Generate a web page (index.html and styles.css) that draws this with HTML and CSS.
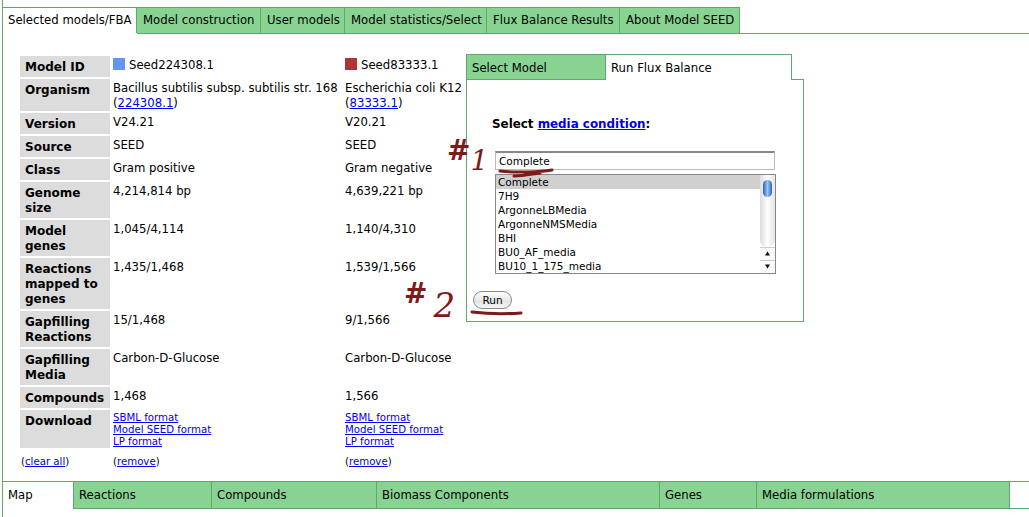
FILE: index.html
```html
<!DOCTYPE html>
<html lang="en">
<head>
    <meta charset="UTF-8">
    <title>Model SEED - Selected models</title>
    <link rel="stylesheet" href="styles.css">
</head>
<body>
    <div class="page">
        <div class="tabs top-tabs">
            <div class="tab active first">Selected models/FBA</div>
            <div class="tab">Model construction</div>
            <div class="tab">User models</div>
            <div class="tab">Model statistics/Select</div>
            <div class="tab">Flux Balance Results</div>
            <div class="tab">About Model SEED</div>
        </div>
        <div class="main">
            <table class="models">
                <tr>
                    <th>Model ID</th>
                    <td><span class="swatch blue"></span>Seed224308.1</td>
                    <td><span class="swatch red"></span>Seed83333.1</td>
                </tr>
                <tr>
                    <th>Organism</th>
                    <td>Bacillus subtilis subsp. subtilis str. 168<br>(<a href="#">224308.1</a>)</td>
                    <td>Escherichia coli K12<br>(<a href="#">83333.1</a>)</td>
                </tr>
                <tr><th>Version</th><td>V24.21</td><td>V20.21</td></tr>
                <tr><th>Source</th><td>SEED</td><td>SEED</td></tr>
                <tr><th>Class</th><td>Gram positive</td><td>Gram negative</td></tr>
                <tr><th>Genome size</th><td>4,214,814 bp</td><td>4,639,221 bp</td></tr>
                <tr><th>Model genes</th><td>1,045/4,114</td><td>1,140/4,310</td></tr>
                <tr><th>Reactions mapped to genes</th><td>1,435/1,468</td><td>1,539/1,566</td></tr>
                <tr><th>Gapfilling Reactions</th><td>15/1,468</td><td>9/1,566</td></tr>
                <tr><th>Gapfilling Media</th><td>Carbon-D-Glucose</td><td>Carbon-D-Glucose</td></tr>
                <tr><th>Compounds</th><td>1,468</td><td>1,566</td></tr>
                <tr>
                    <th>Download</th>
                    <td class="small"><a href="#">SBML format</a><br><a href="#">Model SEED format</a><br><a href="#">LP format</a></td>
                    <td class="small"><a href="#">SBML format</a><br><a href="#">Model SEED format</a><br><a href="#">LP format</a></td>
                </tr>
                <tr class="foot">
                    <td>(<a href="#">clear all</a>)</td>
                    <td>(<a href="#">remove</a>)</td>
                    <td>(<a href="#">remove</a>)</td>
                </tr>
            </table>
            <div class="fba">
                <div class="tabs sub-tabs">
                    <div class="tab select-tab">Select Model</div>
                    <div class="tab active run-tab">Run Flux Balance</div>
                </div>
                <div class="fba-body">
                    <p class="media-title">Select <a href="#">media condition</a>:</p>
                    <input class="media-input" type="text" value="Complete">
                    <div class="listbox">
                        <ul>
                            <li class="selected">Complete</li>
                            <li>7H9</li>
                            <li>ArgonneLBMedia</li>
                            <li>ArgonneNMSMedia</li>
                            <li>BHI</li>
                            <li>BU0_AF_media</li>
                            <li>BU10_1_175_media</li>
                        </ul>
                        <div class="scroll">
                            <div class="track"><div class="thumb"></div></div>
                            <div class="arrow"><svg width="15" height="13" viewBox="0 0 15 13"><path d="M7.5 4.5 L10 8.5 H5 Z" fill="#111"/></svg></div>
                            <div class="arrow"><svg width="15" height="13" viewBox="0 0 15 13"><path d="M7.5 8.5 L10 4.5 H5 Z" fill="#111"/></svg></div>
                        </div>
                    </div>
                    <button class="run" type="button">Run</button>
                </div>
                <span class="note note-one">#<span class="digit">1</span></span>
                <span class="note note-two">#<span class="digit digit-two">2</span></span>
                <svg class="scribble scribble-one" width="70" height="14" viewBox="0 0 70 14"><path d="M4 4 C20 6 45 5 56 3 M18 9 C28 9 36 7 44 6" fill="none" stroke="#7d1a1a" stroke-width="3" stroke-linecap="round"/></svg>
                <svg class="scribble scribble-two" width="60" height="10" viewBox="0 0 60 10"><path d="M3 4 C20 6 38 6 52 5" fill="none" stroke="#7d1a1a" stroke-width="3" stroke-linecap="round"/></svg>
            </div>
        </div>
        <div class="tabs bottom-tabs">
            <div class="tab active map-tab">Map</div>
            <div class="tab w-reactions">Reactions</div>
            <div class="tab w-compounds">Compounds</div>
            <div class="tab w-biomass">Biomass Components</div>
            <div class="tab w-genes">Genes</div>
            <div class="tab w-media">Media formulations</div>
            <div class="tab-fill"></div>
        </div>
    </div>
</body>
</html>
```

FILE: styles.css
```css
html, body{
  margin: 0;
  padding: 0;
  height: 517px;
  overflow: hidden;
  background: white;
}
body{
  font-family: 'DejaVu Sans', Verdana, sans-serif;
  font-size: 11.7px;
  line-height: 15px;
  color: black;
}
a{
  color: #0000ee;
}
.page{
  margin-left: 2px;
  padding-top: 7px;
  height: 510px;
  border-left: 1px solid #5fa96b;
}
.tabs{
  display: flex;
}
.tab{
  background-color: #88d391;
  border: 1px solid #5fa96b;
  border-left: none;
  box-sizing: border-box;
  padding: 0 5px;
  white-space: nowrap;
}
.tab.active{
  background-color: white;
}
.top-tabs{
  height: 26px;
  box-sizing: border-box;
  border-top: 1px solid #5fa96b;
  width: 737px;
}
.top-tabs .tab{
  border-top: none;
  border-bottom: none;
  height: 25px;
  line-height: 25px;
  padding-left: 6px;
}
.top-tabs .tab:nth-child(1){ width: 134px; padding-left: 5px; }
.top-tabs .tab:nth-child(2){ width: 124px; }
.top-tabs .tab:nth-child(3){ width: 84px; }
.top-tabs .tab:nth-child(4){ width: 142px; }
.top-tabs .tab:nth-child(5){ width: 133px; }
.top-tabs .tab:nth-child(6){ width: 120px; }
.main{
  display: flex;
  align-items: flex-start;
  height: 448px;
  box-sizing: border-box;
  margin-left: 134px;
  border-top: 1px solid #5fa96b;
  padding-top: 20px;
}
.models{
  margin-left: -119px;
  border-collapse: separate;
  border-spacing: 2px;
  table-layout: fixed;
  width: 448px;
  flex: none;
}
.models th{
  width: 80px;
  background-color: #dcdcdc;
  padding: 4px 5px 2px;
  text-align: left;
  vertical-align: top;
  font-weight: bold;
  font-size: 12px;
}
.models td{
  padding: 2px 1px 0;
  vertical-align: top;
  white-space: nowrap;
}
.models td:nth-child(2){
  width: 228px;
}
.models td.small{
  font-size: 10.2px;
  line-height: 12px;
}
.swatch{
  display: inline-block;
  width: 12px;
  height: 12px;
  margin-right: 4px;
  vertical-align: -1px;
}
.swatch.blue{
  background-color: #6495ed;
}
.swatch.red{
  background-color: #b03335;
}
.models .foot td{
  padding-top: 4px;
  font-size: 10.2px;
}
.fba{
  position: relative;
  flex: none;
  width: 338px;
}
.sub-tabs{
  height: 26px;
}
.sub-tabs .tab{
  height: 26px;
  line-height: 26px;
}
.sub-tabs .select-tab{
  width: 140px;
  border-left: 1px solid #5fa96b;
}
.sub-tabs .run-tab{
  width: 186px;
  border-bottom: none;
}
.fba-body{
  box-sizing: border-box;
  height: 242px;
  border: 1px solid #5fa96b;
  border-top: none;
  padding: 37px 25px 0 25px;
  position: relative;
}
.fba-body::before{
  content: "";
  position: absolute;
  left: 325px;
  right: -1px;
  top: -1px;
  border-top: 1px solid #5fa96b;
}
.media-title{
  margin: 0 0 19px 0;
  font-weight: bold;
  font-size: 11.9px;
}
.media-input{
  display: block;
  box-sizing: border-box;
  width: 280px;
  height: 19px;
  margin: 0 0 0 3px;
  padding: 0 4px 0 3px;
  border: 1px solid #bbb;
  border-top: 2px solid #888;
  font-family: 'DejaVu Sans', Verdana, sans-serif;
  font-size: 10.5px;
  outline: none;
}
.listbox{
  display: flex;
  box-sizing: border-box;
  width: 281px;
  height: 100px;
  margin: 4px 0 0 3px;
  border: 1px solid #888;
  font-size: 10.5px;
  line-height: 14px;
}
.listbox ul{
  flex: 1;
  margin: 0;
  padding: 0;
  list-style: none;
  overflow: hidden;
}
.listbox li{
  padding-left: 2px;
  height: 14px;
}
.listbox li.selected{
  background-color: #d0d0d0;
}
.scroll{
  width: 15px;
  display: flex;
  flex-direction: column;
}
.track{
  flex: 1;
  background: linear-gradient(to right, #dcdcdc, #fff 50%, #e4e4e4);
  border-radius: 0 0 7px 7px;
  padding-top: 5px;
}
.thumb{
  width: 9px;
  height: 17px;
  margin-left: 3px;
  border-radius: 5px;
  background: linear-gradient(to right, #1f62bd, #9cc6f3 50%, #1f62bd);
}
.arrow{
  height: 13px;
  border-top: 1px solid #ccc;
  box-sizing: border-box;
  background: #fafafa;
}
.arrow svg{
  display: block;
  margin-top: -1px;
}
.run{
  display: block;
  margin: 17px 0 0 -19px;
  width: 39px;
  height: 18px;
  padding: 0;
  border: 1px solid #8a8a8a;
  border-radius: 9px;
  background: linear-gradient(#fff, #e4e4e4 60%, #f4f4f4);
  font-family: 'DejaVu Sans', Verdana, sans-serif;
  font-size: 10.5px;
  color: black;
}
.note{
  position: absolute;
  color: #7d1a1a;
  font-family: 'DejaVu Serif', serif;
  font-style: italic;
  font-weight: bold;
  font-size: 28px;
  line-height: 30px;
}
.digit{
  position: relative;
  top: 10px;
  font-weight: normal;
}
.digit-two{
  top: 14px;
  margin-left: 6px;
  font-size: 34px;
}
.note-one{
  left: -19px;
  top: 82px;
}
.note-two{
  left: -62px;
  top: 222px;
}
.scribble{
  position: absolute;
}
.scribble-one{
  left: 30px;
  top: 113px;
}
.scribble-two{
  left: 3px;
  top: 254px;
}
.bottom-tabs{
  height: 28px;
  border-top: 1px solid #5fa96b;
  box-sizing: border-box;
}
.bottom-tabs .tab{
  height: 27px;
  border-top: none;
  line-height: 27px;
}
.bottom-tabs .map-tab{
  width: 70px;
  border-bottom: none;
  border-right: none;
}
.bottom-tabs .w-reactions{ width: 139px; border-left: 1px solid #5fa96b; }
.bottom-tabs .w-compounds{ width: 165px; }
.bottom-tabs .w-biomass{ width: 283px; }
.bottom-tabs .w-genes{ width: 97px; }
.bottom-tabs .w-media{ width: 253px; }
.tab-fill{
  flex: 1;
  height: 27px;
  box-sizing: border-box;
  border-bottom: 1px solid #5fa96b;
}
```
